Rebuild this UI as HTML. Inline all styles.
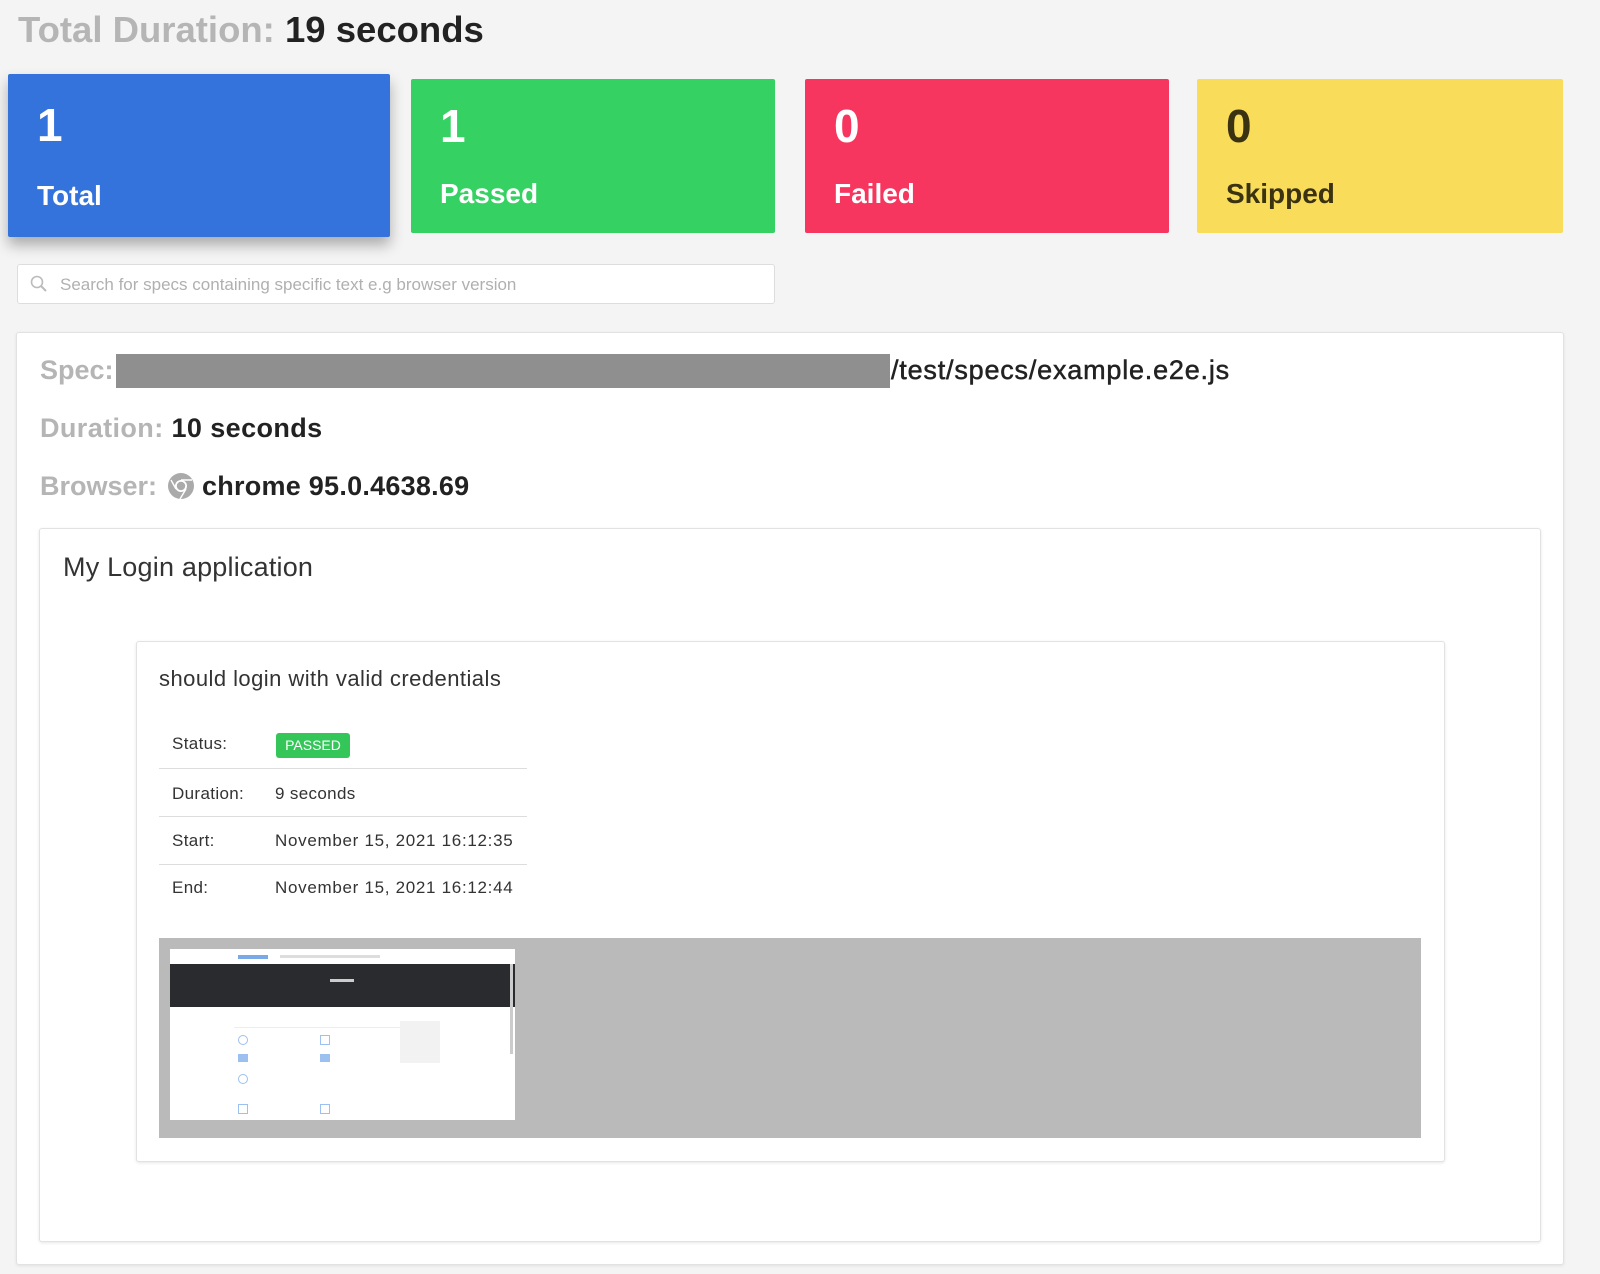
<!DOCTYPE html>
<html><head><meta charset="utf-8"><style>
*{margin:0;padding:0;box-sizing:border-box}
body{width:1600px;height:1274px;background:#f4f4f4;font-family:"Liberation Sans",Arial,sans-serif;position:relative;overflow:hidden}
.a{position:absolute}
.card{position:absolute;color:#fff;border-radius:2px}
.card .n{position:absolute;left:29px;top:24px;font-size:46px;font-weight:bold}
.card .l{position:absolute;left:29px;font-size:28px;font-weight:bold}
.lbl{color:#b5b5b5}
.row{position:absolute;left:172px;font-size:17px;color:#333;letter-spacing:.35px}
.line{position:absolute;left:159px;width:368px;height:1px;background:#ddd}
</style></head><body>
<div class="a" style="left:18px;top:9px;font-size:36.5px;font-weight:bold;white-space:nowrap"><span class="lbl">Total Duration:</span> <span style="color:#222">19 seconds</span></div>

<div class="card" style="left:8px;top:74px;width:382px;height:163px;background:#3373db;box-shadow:0 8px 14px rgba(0,0,0,.3)"><div class="n">1</div><div class="l" style="top:106px">Total</div></div>
<div class="card" style="left:411px;top:79px;width:364px;height:154px;background:#35d163"><div class="n" style="top:20px">1</div><div class="l" style="top:99px">Passed</div></div>
<div class="card" style="left:805px;top:79px;width:364px;height:154px;background:#f7365f"><div class="n" style="top:20px">0</div><div class="l" style="top:99px">Failed</div></div>
<div class="card" style="left:1197px;top:79px;width:366px;height:154px;background:#f9dc5a;color:#3a3210"><div class="n" style="top:20px">0</div><div class="l" style="top:99px">Skipped</div></div>

<div class="a" style="left:17px;top:264px;width:758px;height:40px;background:#fff;border:1px solid #ddd;border-radius:3px">
<svg class="a" style="left:11px;top:9px" width="20" height="20" viewBox="0 0 20 20"><circle cx="8" cy="8" r="5.5" fill="none" stroke="#bbb" stroke-width="1.6"/><path d="M12 12l5 5" stroke="#bbb" stroke-width="2"/></svg>
<div class="a" style="left:42px;top:10px;font-size:17px;color:#b0b0b0;white-space:nowrap">Search for specs containing specific text e.g browser version</div></div>

<div class="a" style="left:16px;top:332px;width:1548px;height:933px;background:#fff;border:1px solid #e2e2e2;border-radius:3px;box-shadow:0 1px 3px rgba(0,0,0,.08)"></div>
<div class="a" style="left:40px;top:355px;font-size:27px;font-weight:bold;white-space:nowrap"><span class="lbl">Spec:</span></div>
<div class="a" style="left:116px;top:354px;width:774px;height:34px;background:#8f8f8f"></div>
<div class="a" style="left:891px;top:355px;font-size:27px;color:#222;white-space:nowrap;letter-spacing:.8px;-webkit-text-stroke:.5px #222">/test/specs/example.e2e.js</div>
<div class="a" style="left:40px;top:413px;font-size:27px;font-weight:bold;white-space:nowrap;letter-spacing:.4px"><span class="lbl">Duration:</span> <span style="color:#222">10 seconds</span></div>
<div class="a" style="left:40px;top:471px;font-size:27px;font-weight:bold;white-space:nowrap"><span class="lbl">Browser:</span></div>
<svg class="a" style="left:167px;top:472px" width="28" height="28" viewBox="0 0 28 28"><circle cx="14" cy="14" r="13" fill="#aaa"/><circle cx="14" cy="14" r="6" fill="#fff"/><circle cx="14" cy="14" r="4.2" fill="#aaa"/><path d="M14 8h11M9 17L4 8M19 17l-6 10" stroke="#fff" stroke-width="1.4"/></svg>
<div class="a" style="left:202px;top:471px;font-size:27px;font-weight:bold;color:#222;white-space:nowrap;letter-spacing:.25px">chrome 95.0.4638.69</div>

<div class="a" style="left:39px;top:528px;width:1502px;height:714px;background:#fff;border:1px solid #e2e2e2;border-radius:3px;box-shadow:0 1px 3px rgba(0,0,0,.1)"></div>
<div class="a" style="left:63px;top:552px;font-size:27px;color:#333;white-space:nowrap;letter-spacing:.2px">My Login application</div>

<div class="a" style="left:136px;top:641px;width:1309px;height:521px;background:#fff;border:1px solid #e2e2e2;border-radius:3px;box-shadow:0 1px 3px rgba(0,0,0,.1)"></div>
<div class="a" style="left:159px;top:666px;font-size:22px;color:#333;white-space:nowrap;letter-spacing:.45px">should login with valid credentials</div>
<div class="row" style="top:734px">Status:</div>
<div class="a" style="left:276px;top:733px;width:74px;height:25px;background:#35c65a;border-radius:3px;color:#fff;font-size:14px;text-align:center;line-height:25px">PASSED</div>
<div class="line" style="top:768px"></div>
<div class="row" style="top:784px">Duration:</div><div class="row" style="left:275px;top:784px">9 seconds</div>
<div class="line" style="top:816px"></div>
<div class="row" style="top:831px">Start:</div><div class="row" style="left:275px;top:831px;letter-spacing:.7px">November 15, 2021 16:12:35</div>
<div class="line" style="top:864px"></div>
<div class="row" style="top:878px">End:</div><div class="row" style="left:275px;top:878px;letter-spacing:.7px">November 15, 2021 16:12:44</div>

<div class="a" style="left:159px;top:938px;width:1262px;height:200px;background:#bababa"></div>
<div class="a" style="left:170px;top:949px;width:345px;height:171px;background:#fff">
<div class="a" style="left:68px;top:6px;width:30px;height:4px;background:#7aa9e8"></div>
<div class="a" style="left:110px;top:6px;width:100px;height:3px;background:#ddd"></div>
<div class="a" style="left:0;top:15px;width:345px;height:43px;background:#2a2b2e"></div>
<div class="a" style="left:160px;top:30px;width:24px;height:3px;background:#ccc"></div>
<div class="a" style="left:64px;top:78px;width:200px;height:1px;background:#eee"></div>
<div class="a" style="left:68px;top:86px;width:10px;height:10px;border-radius:50%;border:1px solid #9cc0ef"></div>
<div class="a" style="left:150px;top:86px;width:10px;height:10px;border:1px solid #9cc0ef"></div>
<div class="a" style="left:68px;top:105px;width:10px;height:8px;background:#9cc0ef"></div>
<div class="a" style="left:150px;top:105px;width:10px;height:8px;background:#9cc0ef"></div>
<div class="a" style="left:68px;top:125px;width:10px;height:10px;border-radius:50%;border:1px solid #9cc0ef"></div>
<div class="a" style="left:68px;top:155px;width:10px;height:10px;border:1px solid #9cc0ef"></div>
<div class="a" style="left:150px;top:155px;width:10px;height:10px;border:1px solid #9cc0ef"></div>
<div class="a" style="left:230px;top:72px;width:40px;height:42px;background:#f2f2f2"></div>
<div class="a" style="left:340px;top:15px;width:3px;height:90px;background:#ccc"></div>
</div>
</body></html>
